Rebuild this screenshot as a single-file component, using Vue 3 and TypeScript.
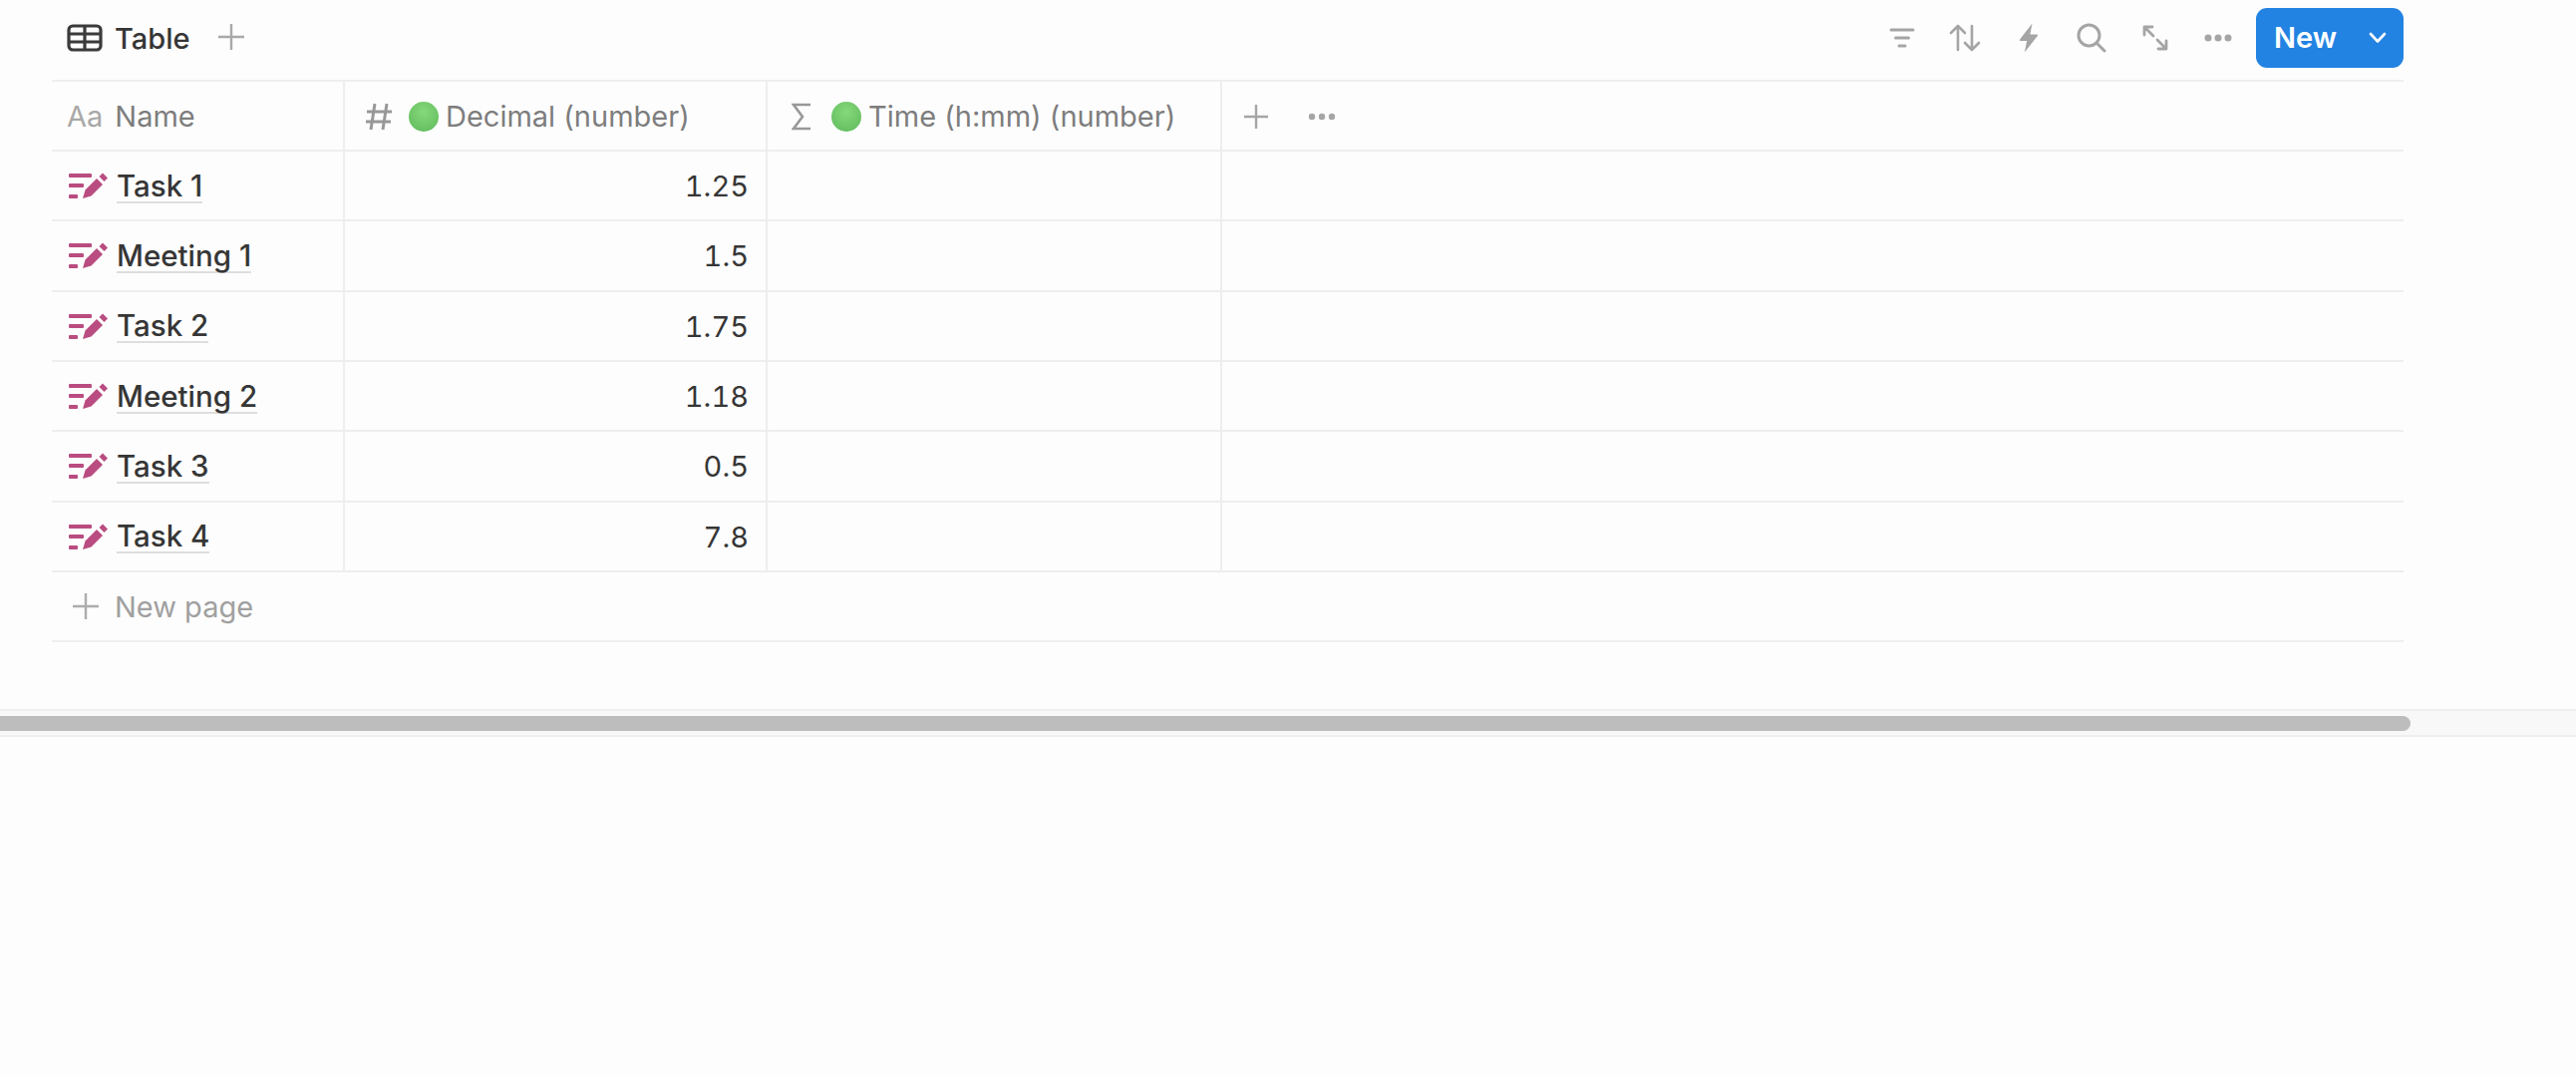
<script setup lang="ts">
const rows: { name: string; value: string }[] = [
  { name: 'Task 1', value: '1.25' },
  { name: 'Meeting 1', value: '1.5' },
  { name: 'Task 2', value: '1.75' },
  { name: 'Meeting 2', value: '1.18' },
  { name: 'Task 3', value: '0.5' },
  { name: 'Task 4', value: '7.8' }
]
</script>

<template>
  <div class="page">
    <header class="toolbar">
      <div class="tab">
        <svg class="tab-icon" width="36" height="28" viewBox="0 0 36 28" fill="none" stroke="#3b3b3b" stroke-width="3.2">
          <rect x="2" y="2" width="32" height="24" rx="4" />
          <path d="M2 10H34M2 18H34M18 2V26" />
        </svg>
        <span class="tab-label">Table</span>
        <svg class="tab-plus" width="26" height="26" viewBox="0 0 26 26" stroke="#a9a9a9" stroke-width="2.4" fill="none">
          <path d="M13 0V26M0 13H26" />
        </svg>
      </div>
      <div class="actions">
        <span class="action">
          <svg width="26" height="20" viewBox="0 0 26 20" fill="none" stroke="#a5a5a5" stroke-width="3" stroke-linecap="round">
            <path d="M2 2H24M6.5 10H19.500M10 18H16" />
          </svg>
        </span>
        <span class="action">
          <svg width="32" height="28" viewBox="0 0 32 28" fill="none" stroke="#a5a5a5" stroke-width="2.600" stroke-linecap="round" stroke-linejoin="round">
            <path d="M9 26V2M2 9L9 2L16 9M23 2V26M16 19L23 26L30 19" />
          </svg>
        </span>
        <span class="action">
          <svg width="20" height="30" viewBox="0 0 20 30" fill="#a5a5a5">
            <path d="M13.500 0.500L1 16.800C0.500 17.500 1 18 1.800 18H8.200L5.800 29.500L19 12.800C19.500 12 19 11.400 18.200 11.400H11.400Z" />
          </svg>
        </span>
        <span class="action">
          <svg width="30" height="30" viewBox="0 0 30 30" fill="none" stroke="#a5a5a5" stroke-width="3" stroke-linecap="round">
            <circle cx="12.500" cy="12.500" r="10.500" />
            <path d="M20.500 20.500L28 28" />
          </svg>
        </span>
        <span class="action">
          <svg width="26" height="26" viewBox="0 0 26 26" fill="none" stroke="#a5a5a5" stroke-width="2.800" stroke-linecap="round" stroke-linejoin="round">
            <path d="M2 10V2H10M2 2L11 11M24 16V24H16M24 24L15 15" />
          </svg>
        </span>
        <span class="action">
          <svg width="28" height="8" viewBox="0 0 28 8" fill="#a5a5a5">
            <circle cx="4" cy="4" r="3.500" />
            <circle cx="14" cy="4" r="3.500" />
            <circle cx="24" cy="4" r="3.500" />
          </svg>
        </span>
        <button class="new-btn">
          <span>New</span>
          <svg width="20" height="12" viewBox="0 0 20 12" fill="none" stroke="#ffffff" stroke-width="2.600" stroke-linecap="round" stroke-linejoin="round">
            <path d="M3 2L10 9.500L17 2" />
          </svg>
        </button>
      </div>
    </header>

    <section class="table">
      <div class="row head">
        <div class="cell c1">
          <span class="aa">Aa</span>
          <span>Name</span>
        </div>
        <div class="cell c2">
          <svg class="head-icon" width="28" height="30" viewBox="0 0 28 30" fill="none" stroke="#989898" stroke-width="3">
            <path d="M10 2L6 28M22 2L18 28M2 10H27M1 20H26" />
          </svg>
          <span class="ball"></span>
          <span>Decimal (number)</span>
        </div>
        <div class="cell c3">
          <svg class="head-icon sigma" width="20" height="28" viewBox="0 0 20 28" fill="none" stroke="#989898" stroke-width="2.600">
            <path d="M19 2H2L11 14L2 26H19" />
          </svg>
          <span class="ball"></span>
          <span>Time (h:mm) (number)</span>
        </div>
        <div class="cell c4">
          <svg width="24" height="24" viewBox="0 0 24 24" fill="none" stroke="#a5a5a5" stroke-width="2.400">
            <path d="M12 0V24M0 12H24" />
          </svg>
          <svg class="more" width="28" height="8" viewBox="0 0 28 8" fill="#a5a5a5">
            <circle cx="4" cy="4" r="3.200" />
            <circle cx="14" cy="4" r="3.200" />
            <circle cx="24" cy="4" r="3.200" />
          </svg>
        </div>
      </div>

      <div v-for="r in rows" :key="r.name" class="row">
        <div class="cell c1 title">
          <svg class="task-icon" width="39" height="26" viewBox="0 0 39 26" fill="#b94c80">
            <rect x="0" y="1" width="23" height="4" rx="1" />
            <rect x="0" y="11" width="15" height="4" rx="1" />
            <rect x="0" y="22" width="9" height="4" rx="1" />
            <path d="M14 26L16.500 17.500L28 6L34 12L22.500 23.500Z" />
            <path d="M30.500 4L34 0.500L39 5.500L35.500 9Z" />
          </svg>
          <span class="name">{{ r.name }}</span>
        </div>
        <div class="cell c2 num">{{ r.value }}</div>
        <div class="cell c3"></div>
        <div class="cell c4"></div>
      </div>

      <div class="row add">
        <svg width="26" height="26" viewBox="0 0 26 26" fill="none" stroke="#acacac" stroke-width="2.400">
          <path d="M13 0V26M0 13H26" />
        </svg>
        <span>New page</span>
      </div>
    </section>

    <div class="scroll-track">
      <div class="scroll-thumb"></div>
    </div>
  </div>
</template>

<style scoped>
.page {
  width: 2584px;
  height: 1080px;
  overflow: hidden;
  background: #fdfdfd;
  font-family: Inter, "Liberation Sans", sans-serif;
  font-size: 29px;
  color: #363636;
}
.toolbar {
  height: 80px;
  box-sizing: border-box;
  margin: 0 173px 0 52px;
  padding: 8px 0 12px 15px;
  display: flex;
  align-items: center;
  justify-content: space-between;
}
.tab {
  display: flex;
  align-items: center;
}
.tab-icon {
  margin-right: 12px;
}
.tab-label {
  font-weight: 500;
}
.tab-plus {
  margin-left: 28px;
  margin-top: -3px;
}
.actions {
  display: flex;
  align-items: center;
  margin-top: -1px;
}
.action {
  width: 63.500px;
  height: 60px;
  display: flex;
  align-items: center;
  justify-content: center;
}
.new-btn {
  width: 148px;
  height: 60px;
  margin-left: 6px;
  padding: 0 16px 0 18px;
  border: none;
  border-radius: 11px;
  background: #2383e2;
  color: #fff;
  font: 600 29px Inter, "Liberation Sans", sans-serif;
  display: flex;
  align-items: center;
  justify-content: space-between;
}
.table {
  width: 2359px;
  margin-left: 52px;
  border-top: 2px solid #eeeeee;
}
.row {
  display: flex;
  height: 70.330px;
  box-sizing: border-box;
  border-bottom: 2px solid #eeeeee;
}
.head {
  height: 70px;
  color: #7d7d7d;
}
.cell {
  display: flex;
  align-items: center;
  box-sizing: border-box;
  border-right: 2px solid #eeeeee;
  padding-top: 1px;
}
.c1 {
  width: 294px;
  padding-left: 15px;
}
.c2 {
  width: 424px;
  padding-left: 20px;
}
.c3 {
  width: 456px;
  padding-left: 24px;
}
.c4 {
  flex: 1;
  padding-left: 22px;
  border-right: none;
}
.aa {
  color: #a8a8a8;
  margin-right: 12px;
}
.head-icon {
  margin-right: 16px;
}
.sigma {
  margin-right: 20px;
}
.ball {
  width: 30px;
  height: 30px;
  margin-right: 7px;
  border-radius: 50%;
  background: radial-gradient(circle at 50% 35%, #86d97a, #5cb85a);
}
.more {
  margin-left: 40px;
}
.title {
  padding-left: 17px;
}
.task-icon {
  margin-right: 9px;
  margin-top: -1px;
}
.name {
  font-size: 29.500px;
  font-weight: 450;
  border-bottom: 2px solid #dedede;
  line-height: 32px;
}
.num {
  justify-content: flex-end;
  padding-right: 17px;
  font-variant-numeric: tabular-nums;
  font-size: 29px;
}
.add {
  align-items: center;
  padding-left: 21px;
  color: #a0a0a0;
  gap: 16px;
}
.scroll-track {
  height: 28px;
  margin-top: 67px;
  box-sizing: border-box;
  padding-top: 5px;
  background: #f8f8f8;
  border-top: 2px solid #eeeeee;
  border-bottom: 2px solid #eeeeee;
}
.scroll-thumb {
  width: 2418px;
  height: 15px;
  border-radius: 0 8px 8px 0;
  background: #bdbdbd;
}
</style>

<style>
body {
  background: #fdfdfd;
}
</style>
